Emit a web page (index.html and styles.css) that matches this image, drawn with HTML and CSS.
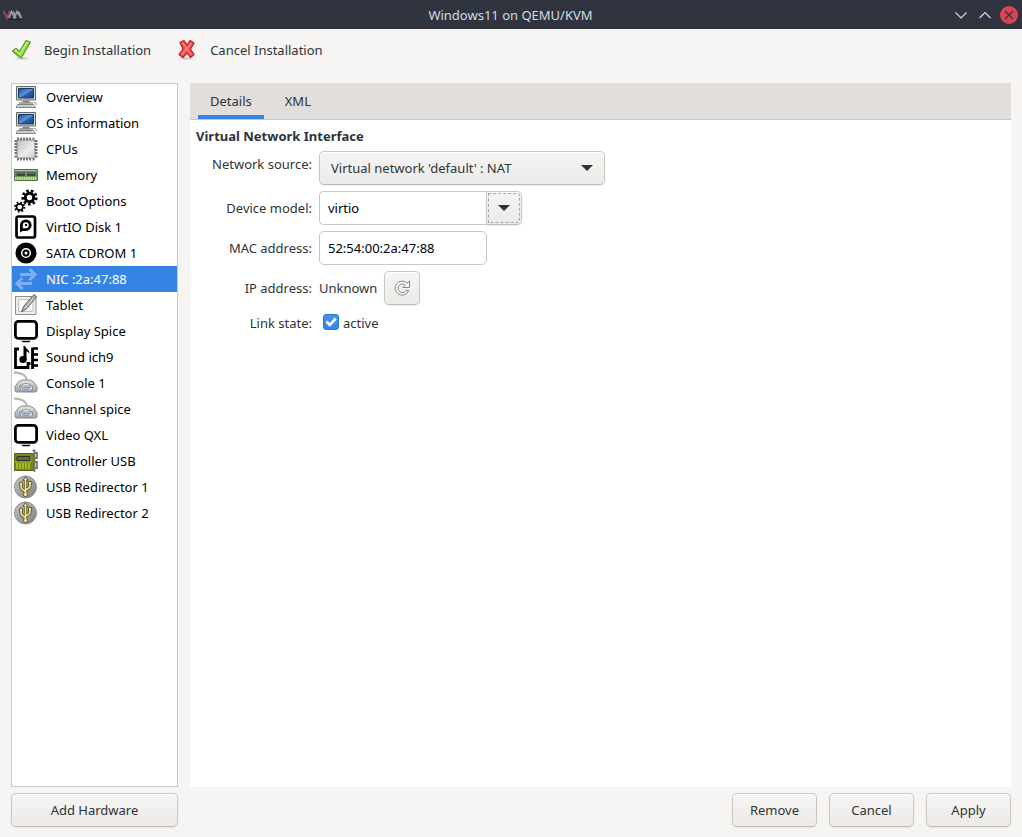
FILE: index.html
```html
<!DOCTYPE html>
<html lang="en">
<head>
<meta charset="utf-8">
<title>Windows11 on QEMU/KVM</title>
<link rel="stylesheet" href="styles.css">
</head>
<body>
<svg class="defs" aria-hidden="true">
  <defs>
    <linearGradient id="g-screen" x1="0" y1="0" x2="1" y2="1"><stop offset="0" stop-color="#1d4a94"/><stop offset=".5" stop-color="#5f97d8"/><stop offset=".55" stop-color="#2d62ac"/><stop offset="1" stop-color="#174284"/></linearGradient>
    <linearGradient id="g-chip" x1="0" y1="0" x2="1" y2="1"><stop offset="0" stop-color="#bcbcbc"/><stop offset=".6" stop-color="#ececec"/><stop offset="1" stop-color="#cfcfcf"/></linearGradient>
    <linearGradient id="g-usb" x1="0" y1="0" x2="1" y2="1"><stop offset="0" stop-color="#c6c6c6"/><stop offset="1" stop-color="#7e7e7e"/></linearGradient>
    <linearGradient id="g-body" x1="0" y1="0" x2="0" y2="1"><stop offset="0" stop-color="#e6e6e6"/><stop offset="1" stop-color="#a2a2a2"/></linearGradient>
    <radialGradient id="g-shadow"><stop offset="0" stop-color="#000" stop-opacity=".22"/><stop offset="1" stop-color="#000" stop-opacity="0"/></radialGradient>
    <symbol id="computer" viewBox="0 0 24 24">
      <path d="M2.500 1.500h19v13.500h-19z" fill="#d8d9d4" stroke="#666863"/>
      <path d="M4.500 3.500h15v9.500h-15z" fill="url(#g-screen)" stroke="#1b3a6c"/>
      <path d="M9 15.500h6l1 2H8z" fill="#888"/>
      <path d="M5 18h14" stroke="#55575a" stroke-width="1"/>
      <path d="M3.500 19.500h16l2 3h-19.500z" fill="#e4e4e1" stroke="#777974" stroke-width=".9"/>
      <path d="M4.500 21h14" stroke="#92938f" stroke-dasharray="1 .6"/>
      <path d="M19.500 17.500q3-.5 3 2.500" fill="none" stroke="#999"/>
    </symbol>
    <symbol id="cpu" viewBox="0 0 24 24">
      <path d="M4 .5v23M7 .5v23M10 .5v23M13 .5v23M16 .5v23M19.500 .5v23M.5 4h23M.5 7h23M.5 10h23M.5 13h23M.5 16h23M.5 19.500h23" stroke="#6a6a6a" stroke-width="1.800"/>
      <rect x="3" y="3" width="18" height="18" rx="1.500" fill="url(#g-chip)" stroke="#858585"/>
    </symbol>
    <symbol id="memory" viewBox="0 0 24 24">
      <path d="M.5 6.500h23v11H.5z" fill="#669b5d" stroke="#4b7545"/>
      <path d="M1 7.500h22" stroke="#a7c7a0"/>
      <path d="M2.500 9h8.500v4H2.500zM13 9h8.500v4H13z" fill="#3e4744"/>
      <path d="M3 10h7.500M13.500 10h7.500" stroke="#7d8582"/>
      <path d="M1 15.500h22" stroke="#e4dc8c" stroke-width="3" stroke-dasharray="1.500 .7"/>
    </symbol>
    <symbol id="boot" viewBox="0 0 24 24">
      <circle cx="15.500" cy="8.500" r="4.200" fill="none" stroke="#000" stroke-width="3"/>
      <circle cx="15.500" cy="8.500" r="6.700" fill="none" stroke="#000" stroke-width="2.800" stroke-dasharray="2.600 2.077"/>
      <circle cx="5.700" cy="18" r="3.200" fill="none" stroke="#000" stroke-width="1.700"/>
      <circle cx="5.700" cy="18" r="4.700" fill="none" stroke="#000" stroke-width="1.900" stroke-dasharray="1.700 1.992"/>
    </symbol>
    <symbol id="disk" viewBox="0 0 24 24">
      <rect x="2.500" y="1.500" width="18.500" height="21" rx="2" fill="#fff" stroke="#000" stroke-width="2.700"/>
      <path d="M6 17.500v-7.300a5.800 5.800 0 1 1 5.800 5.800H8.500z"/>
      <path d="M8.800 13.300v-3.200a3 3 0 1 1 3 3.200z" fill="#fff"/>
      <circle cx="12" cy="10" r="1.200"/>
    </symbol>
    <symbol id="cdrom" viewBox="0 0 24 24">
      <circle cx="12" cy="12" r="10.500"/>
      <circle cx="12" cy="12" r="4.300" fill="none" stroke="#fff" stroke-width="1.500"/>
      <circle cx="12" cy="12" r="1.500" fill="#fff"/>
    </symbol>
    <symbol id="nic" viewBox="0 0 24 24">
      <path d="M6 7.500h14.500M15.500 2l5.500 5.500-5.500 5.500M18 16.500H3.500M8.500 11l-5.500 5.500 5.500 5.500" fill="none" stroke="#7eb0ef" stroke-width="3"/>
    </symbol>
    <symbol id="tablet" viewBox="0 0 24 24">
      <path d="M1.500 3.500h20.500v18H1.500z" fill="#eee" stroke="#8d8f8a"/>
      <path d="M4.500 6.500h14.500v12H4.500z" fill="#fff" stroke="#c0c0bd"/>
      <path d="M20 1.500l2.500 2L13 15.500 7.500 19 9.500 13.500z" fill="#a9aaa8" stroke="#666863"/>
      <path d="M20 4.500L11 15.500" stroke="#e8e8e8"/>
    </symbol>
    <symbol id="display" viewBox="0 0 24 24">
      <rect x="1.400" y="2.400" width="21.200" height="17" rx="3" fill="#fff" stroke="#000" stroke-width="2.800"/>
      <path d="M7 21.800h10l-2 1.400H9z"/>
    </symbol>
    <symbol id="sound" viewBox="0 0 24 24">
      <path d="M5 4H1.500v18.500H14v-4h2.500M18.500 2.500V24" fill="none" stroke="#000" stroke-width="2.800"/>
      <path d="M19 3.500h5M19 9.500h5M19 15h5M19 20.500h5" stroke="#000" stroke-width="2.700"/>
      <path d="M9.500 1h1.500c1 3 4.500 3.500 4.500 7.500-1.500-1.500-2-2-3-2V15H9.500z"/>
      <ellipse cx="9" cy="14.500" rx="3.700" ry="3.500"/>
    </symbol>
    <symbol id="serial" viewBox="0 0 24 24">
      <path d="M0 1.500C8 2 12.500 4 12.500 9" fill="none" stroke="#b4b4b4" stroke-width="1.800"/>
      <path d="M8 9h8q4 1 7 6.500v4q0 1.500-2 1.500H3q-2 0-2-1.500v-4Q4 10 8 9z" fill="url(#g-body)" stroke="#8a8a8a"/>
      <path d="M6 15q6-5 12 0" fill="#f6f6f6" stroke="#999"/>
      <path d="M5.500 15h13.500l-1.500 5H7z" fill="#e6ebf2" stroke="#888"/>
      <path d="M7.500 16.700h9M8.300 18.500h7.500" stroke="#4882d0" stroke-width="1.300" stroke-dasharray="1.400 .5"/>
    </symbol>
    <symbol id="pci" viewBox="0 0 24 24">
      <path d="M.5 4.500h19v17H.5z" fill="#76861b" stroke="#58641a"/>
      <path d="M3 14v6M6 14v6M9 14v6M12 14v6M15 14v6" stroke="#bfd425" stroke-width="1.300"/>
      <path d="M3 7.500h12.500v4H3z" fill="#5d655c" stroke="#2e342d"/>
      <path d="M0 13h19" stroke="#a6bb29" stroke-width=".8"/>
      <path d="M18.500 1.500h2V23M21 4h2v5h-2M21 13h2v6h-2" fill="none" stroke="#777976" stroke-width="1.800"/>
    </symbol>
    <symbol id="usb" viewBox="0 0 24 24">
      <circle cx="11.500" cy="12" r="11" fill="url(#g-usb)" stroke="#909090"/>
      <path d="M11.500 4v15M7 9v3q0 2 4.500 4.500M16 8v3q0 2-4.500 4" fill="none" stroke="#5d552c" stroke-width="3.200"/>
      <path d="M11.500 1.500L14 5.500H9zM14.500 6.500h3.200v3.200h-3.200z" fill="#fbec91" stroke="#5d552c"/>
      <circle cx="7" cy="9" r="1.800" fill="#fbec91" stroke="#5d552c"/>
      <circle cx="11.500" cy="19.500" r="2.100" fill="#fbec91" stroke="#5d552c"/>
      <path d="M11.500 4v15M7 9v3q0 2 4.500 4.500M16 8v3q0 2-4.500 4" fill="none" stroke="#fbec91" stroke-width="1.500"/>
    </symbol>
  </defs>
</svg>

<div class="window">
  <header class="titlebar">
    <svg width="20" height="10" viewBox="0 0 20 10" aria-hidden="true">
      <path d="M.5 1l3.500 7L7 1" fill="none" stroke="#8a4a5b" stroke-width="2.200"/>
      <path d="M6 8l2.500-6.500L11.500 8 14 1.500 18 8M10.500 1.500L13 8M15.500 1.500l3 6.500" fill="none" stroke="#9a9ca0" stroke-width="1.600"/>
      <path d="M5 9.500h14" stroke="#1d2027"/>
    </svg>
    <h1 class="title">Windows11 on QEMU/KVM</h1>
    <div class="window-controls">
      <button class="wm-button" aria-label="Minimize"><svg width="18" height="18" viewBox="0 0 18 18"><path d="M3.500 6.500L9 12l5.500-5.500" fill="none" stroke="#d3dae3" stroke-width="1.200"/></svg></button>
      <button class="wm-button" aria-label="Maximize"><svg width="18" height="18" viewBox="0 0 18 18"><path d="M3.500 12L9 6.500l5.500 5.500" fill="none" stroke="#d3dae3" stroke-width="1.200"/></svg></button>
      <button class="wm-button" aria-label="Close"><svg width="18" height="18" viewBox="0 0 18 18"><circle cx="9" cy="9" r="9" fill="#dc4453"/><path d="M5 5l8 8M13 5l-8 8" stroke="#2f343f" stroke-width="1.200"/></svg></button>
    </div>
  </header>

  <div class="toolbar">
    <button class="tool">
      <svg width="22" height="22" viewBox="0 0 22 22" aria-hidden="true"><ellipse cx="11" cy="19.500" rx="9" ry="2" fill="url(#g-shadow)"/><path d="M1.500 12l3.500-2.500 3.500 3 6.500-11 4.500 1.500L10.500 18.500H9z" fill="#8fdd45" stroke="#55951c" stroke-width="1.100" stroke-linejoin="round"/><path d="M3.500 12l1.300-.9 4.200 4L16 3" fill="none" stroke="#c8f29a" stroke-width="1.200"/></svg>
      <span>Begin Installation</span>
    </button>
    <button class="tool">
      <svg width="22" height="22" viewBox="0 0 22 22" aria-hidden="true"><ellipse cx="9" cy="19.500" rx="9" ry="2" fill="url(#g-shadow)"/><path d="M3 3.500l4-2 3 4.500 3-4.500 4 2.500-3.500 6 3.500 5.500-3.500 3-3.500-4.500-4 4.500-4-3 4-5.500z" fill="#f05353" stroke="#b91f1f" stroke-width="1.200" stroke-linejoin="round"/><path d="M5.500 3.500l8.500 12.500M14.500 4L4.500 16" fill="none" stroke="#fa8080" stroke-width="1.200"/></svg>
      <span>Cancel Installation</span>
    </button>
  </div>

  <main class="body">
    <nav class="hardware" aria-label="Hardware">
      <a class="hw" href="#"><svg><use href="#computer"/></svg>Overview</a>
      <a class="hw" href="#"><svg><use href="#computer"/></svg>OS information</a>
      <a class="hw" href="#"><svg><use href="#cpu"/></svg>CPUs</a>
      <a class="hw" href="#"><svg><use href="#memory"/></svg>Memory</a>
      <a class="hw" href="#"><svg><use href="#boot"/></svg>Boot Options</a>
      <a class="hw" href="#"><svg><use href="#disk"/></svg>VirtIO Disk 1</a>
      <a class="hw" href="#"><svg><use href="#cdrom"/></svg>SATA CDROM 1</a>
      <a class="hw selected" href="#" aria-current="page"><svg><use href="#nic"/></svg>NIC :2a:47:88</a>
      <a class="hw" href="#"><svg><use href="#tablet"/></svg>Tablet</a>
      <a class="hw" href="#"><svg><use href="#display"/></svg>Display Spice</a>
      <a class="hw" href="#"><svg><use href="#sound"/></svg>Sound ich9</a>
      <a class="hw" href="#"><svg><use href="#serial"/></svg>Console 1</a>
      <a class="hw" href="#"><svg><use href="#serial"/></svg>Channel spice</a>
      <a class="hw" href="#"><svg><use href="#display"/></svg>Video QXL</a>
      <a class="hw" href="#"><svg><use href="#pci"/></svg>Controller USB</a>
      <a class="hw" href="#"><svg><use href="#usb"/></svg>USB Redirector 1</a>
      <a class="hw" href="#"><svg><use href="#usb"/></svg>USB Redirector 2</a>
    </nav>

    <section class="notebook">
      <div class="tabs" role="tablist">
        <button class="tab active" role="tab" aria-selected="true">Details</button>
        <button class="tab" role="tab" aria-selected="false">XML</button>
      </div>
      <div class="page" role="tabpanel">
        <h2 class="heading">Virtual Network Interface</h2>
        <form class="form">
          <label class="label label-top" for="source">Network source:</label>
          <div class="combo">
            <select id="source" class="button select"><option>Virtual network 'default' : NAT</option></select>
            <svg class="arrow" width="12" height="6" viewBox="0 0 12 6" aria-hidden="true"><path d="M0 0h12L6 6z"/></svg>
          </div>
          <label class="label" for="model">Device model:</label>
          <div class="linked">
            <input id="model" class="entry" type="text" value="virtio">
            <button class="button drop" type="button" aria-label="Choose device model"><svg class="arrow" width="12" height="6" viewBox="0 0 12 6"><path d="M0 0h12L6 6z"/></svg></button>
          </div>
          <label class="label" for="mac">MAC address:</label>
          <div class="value"><input id="mac" class="entry" type="text" value="52:54:00:2a:47:88"></div>
          <span class="label">IP address:</span>
          <div class="value">
            <span>Unknown</span>
            <button class="button refresh" type="button" aria-label="Refresh IP address"><svg width="16" height="16" viewBox="0 0 16 16"><path d="M15.500 1v6.500H9l2.300-2.300A4.300 4.300 0 1 0 12 10.500h2.700A7 7 0 1 1 13.100 3.200z" fill="#fafafa" stroke="#777b7b" stroke-width=".9" stroke-linejoin="round"/></svg></button>
          </div>
          <span class="label">Link state:</span>
          <label class="check">
            <span class="check-box">
              <input type="checkbox" checked>
              <svg width="16" height="16" viewBox="0 0 16 16" aria-hidden="true"><path d="M3.500 7.500l3.300 3.300 6-6.300" fill="none" stroke="#fff" stroke-width="2.600"/></svg>
            </span>
            <span>active</span>
          </label>
        </form>
      </div>
    </section>
  </main>

  <footer class="actions">
    <button class="button add">Add Hardware</button>
    <div class="action-group">
      <button class="button action">Remove</button>
      <button class="button action">Cancel</button>
      <button class="button action">Apply</button>
    </div>
  </footer>
</div>
</body>
</html>
```

FILE: styles.css
```css
* { box-sizing: border-box; }

body {
  margin: 0;
  background: #f6f5f4;
  color: #2e3436;
  font: 13px/18px "Noto Sans", sans-serif;
}

button, input, select { font: inherit; color: inherit; margin: 0; }

svg { display: block; }

.defs { position: absolute; width: 0; height: 0; }

.window { display: flex; flex-direction: column; min-height: 100vh; }

.titlebar {
  display: grid;
  grid-template-columns: 1fr auto 1fr;
  align-items: center;
  height: 29px;
  padding: 0 4px 0 3px;
  background: #2f343f;
  color: #d3dae3;
}

.title { margin: 0; font-size: 13px; font-weight: 400; }

.window-controls { display: flex; justify-content: flex-end; gap: 6px; }

.wm-button { padding: 0; border: 0; background: none; }

.toolbar { display: flex; gap: 26px; height: 54px; padding: 0 11px 12px; }

.tool {
  display: flex;
  align-items: center;
  gap: 11px;
  padding: 0;
  border: 0;
  background: none;
}

.body { display: flex; flex: 1; gap: 12px; padding: 0 11px; }

.hardware {
  flex: none;
  width: 167px;
  border: 1px solid #cdc7c2;
  background: #fff;
}

.hw {
  display: flex;
  align-items: center;
  gap: 8px;
  height: 26px;
  padding-left: 2px;
  color: #000;
  text-decoration: none;
}

.hw svg { width: 24px; height: 24px; }

.hw.selected { background: #3584e4; color: #fff; }

.notebook { flex: 1; background: #fff; }

.tabs {
  display: flex;
  gap: 9px;
  height: 37px;
  padding: 0 8px;
  border-bottom: 1px solid #cdc7c2;
  background: #e1dedb;
}

.tab {
  padding: 4px 12px 0;
  border: 0;
  border-bottom: 4px solid transparent;
  background: none;
}

.tab.active { border-bottom-color: #3584e4; }

.page { padding: 7px 6px; }

.heading { margin: 0 0 6px; font-size: 13px; font-weight: 700; }

.form {
  display: grid;
  grid-template-columns: 116px 1fr;
  gap: 6px 7px;
  align-items: center;
}

.label { text-align: right; }

.label-top { align-self: start; padding-top: 4px; }

.button {
  height: 34px;
  border: 1px solid #cdc7c2;
  border-bottom-color: #bfb8b1;
  border-radius: 5px;
  background: linear-gradient(to top, #edebe9 2px, #f6f5f4);
  box-shadow: inset 0 1px #fff, 0 1px 2px rgba(0, 0, 0, .07);
}

.combo { display: grid; align-items: center; width: 286px; }

.combo > * { grid-area: 1 / 1; }

.select { width: 100%; padding: 0 11px; appearance: none; }

.arrow { fill: #2e3436; }

.combo .arrow { justify-self: end; margin-right: 12px; pointer-events: none; }

.linked { display: flex; }

.value { display: flex; align-items: center; gap: 7px; }

.entry {
  width: 168px;
  height: 34px;
  padding: 0 8px;
  border: 1px solid #cdc7c2;
  border-radius: 5px;
  background: #fff;
  color: #000;
}

.linked .entry { width: 167px; border-right: 0; border-radius: 5px 0 0 5px; }

.drop {
  display: grid;
  place-items: center;
  width: 36px;
  padding: 0;
  border-radius: 0 5px 5px 0;
  outline: 1px dashed #a5a6a5;
  outline-offset: -3px;
}

.refresh { display: grid; place-items: center; width: 36px; padding: 0; }

.check { display: flex; align-items: center; gap: 4px; height: 24px; padding-left: 4px; }

.check-box { display: grid; padding-bottom: 2px; }

.check-box > * { grid-area: 1 / 1; }

.check-box svg { pointer-events: none; visibility: hidden; }

.check-box input {
  appearance: none;
  width: 16px;
  height: 16px;
  border: 1px solid #cdc7c2;
  border-radius: 3px;
  background: #fff;
}

.check-box input:checked {
  border-color: #2a76d2;
  background: linear-gradient(#4a92ea, #3584e4);
}

.check-box input:checked + svg { visibility: visible; }

.actions {
  display: flex;
  justify-content: space-between;
  padding: 6px 11px 10px;
}

.add { width: 167px; }

.action-group { display: flex; gap: 12px; }

.action { width: 85px; }
```
